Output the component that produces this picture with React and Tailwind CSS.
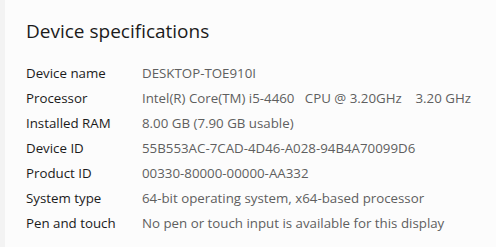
export default function App() {
    const specs = [
        ['Device name', 'DESKTOP-TOE910I'],
        ['Processor', 'Intel(R) Core(TM) i5-4460   CPU @ 3.20GHz    3.20 GHz'],
        ['Installed RAM', '8.00 GB (7.90 GB usable)'],
        ['Device ID', '55B553AC-7CAD-4D46-A028-94B4A70099D6'],
        ['Product ID', '00330-80000-00000-AA332'],
        ['System type', '64-bit operating system, x64-based processor'],
        ['Pen and touch', 'No pen or touch input is available for this display'],
    ];

    return (
        <div className="flex w-[496px] h-[247px] bg-[#fcfcfc] font-['Open_Sans',sans-serif]">
            <div className="w-[5px] bg-[#f3f3f3]" />
            <div className="flex-1 pl-[21px] pt-[17px]">
                <h1 className="text-[19px] leading-[28px] text-[#1b1b1b] mb-[16px]">Device specifications</h1>
                <div className="flex flex-col">
                    {specs.map(([label, value]) => (
                        <div key={label} className="flex h-[25px] items-center text-[13.3px]">
                            <span className="w-[116px] text-[#1b1b1b]">{label}</span>
                            <span className="text-[#5f5f5f] whitespace-pre">{value}</span>
                        </div>
                    ))}
                </div>
            </div>
        </div>
    );
}
